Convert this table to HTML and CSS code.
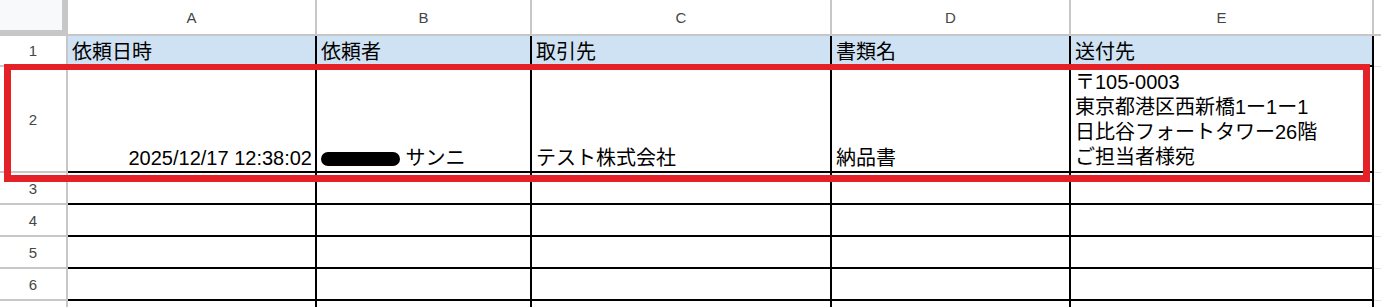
FILE: index.html
```html
<!DOCTYPE html>
<html lang="ja">
<head>
  <meta charset="UTF-8">
  <meta name="viewport" content="width=device-width, initial-scale=1.0">
  <title>送付依頼シート</title>
  <link rel="stylesheet" href="styles.css">
</head>
<body>
  <div class="sheet">
    <!-- column letters -->
    <div class="corner"></div>
    <div class="col-head">A</div>
    <div class="col-head">B</div>
    <div class="col-head">C</div>
    <div class="col-head">D</div>
    <div class="col-head">E</div>
    <div class="col-head rest"></div>

    <!-- row 1: field names -->
    <div class="row-head">1</div>
    <div class="cell title">依頼日時</div>
    <div class="cell title">依頼者</div>
    <div class="cell title">取引先</div>
    <div class="cell title">書類名</div>
    <div class="cell title">送付先</div>
    <div class="cell rest"></div>

    <!-- row 2: first request -->
    <div class="row-head">2</div>
    <div class="cell right">2025/12/17 12:38:02</div>
    <div class="cell"><span class="masked"></span>&nbsp;サンニ</div>
    <div class="cell">テスト株式会社</div>
    <div class="cell">納品書</div>
    <div class="cell">
      <div class="address">〒105-0003<br>東京都港区西新橋1ー1ー1<br>日比谷フォートタワー26階<br>ご担当者様宛</div>
    </div>
    <div class="cell rest"></div>

    <div class="row-head">3</div>
    <div class="cell"></div><div class="cell"></div><div class="cell"></div><div class="cell"></div><div class="cell"></div><div class="cell rest"></div>

    <div class="row-head">4</div>
    <div class="cell"></div><div class="cell"></div><div class="cell"></div><div class="cell"></div><div class="cell"></div><div class="cell rest"></div>

    <div class="row-head">5</div>
    <div class="cell"></div><div class="cell"></div><div class="cell"></div><div class="cell"></div><div class="cell"></div><div class="cell rest"></div>

    <div class="row-head">6</div>
    <div class="cell"></div><div class="cell"></div><div class="cell"></div><div class="cell"></div><div class="cell"></div><div class="cell rest"></div>

    <!-- row 7 only peeks in at the bottom -->
    <div class="row-head"></div>
    <div class="cell"></div><div class="cell"></div><div class="cell"></div><div class="cell"></div><div class="cell"></div><div class="cell rest"></div>
  </div>

  <!-- red marker around row 2 -->
  <div class="highlight"></div>
</body>
</html>
```

FILE: styles.css
```css
body {
  margin: 0;
  background: #fff;
  font-family: 'Liberation Sans', 'Noto Sans CJK JP', sans-serif;
  position: relative;
  overflow: hidden;
}

.sheet {
  display: grid;
  grid-template-columns: 68px 249px 215px 300px 239px 303px 1fr;
  grid-template-rows: 36px 31px 106px 32px 32px 32px 32px 32px;
}

.sheet > div {
  box-sizing: border-box;
}

.corner {
  background: #f8f9fa;
  border-right: 6px solid #c7c7c7;
  border-bottom: 6px solid #c7c7c7;
}

.col-head {
  display: flex;
  align-items: center;
  justify-content: center;
  font-size: 15px;
  color: #444746;
  border-right: 2px solid #c7c7c7;
  border-bottom: 2px solid #c7c7c7;
}

.col-head.rest {
  border-right: none;
}

.row-head {
  display: flex;
  align-items: center;
  justify-content: center;
  font-size: 15px;
  color: #444746;
  border-right: 2px solid #c7c7c7;
  border-bottom: 2px solid #c7c7c7;
}

.cell {
  display: flex;
  align-items: flex-end;
  padding: 0 3px 1px 4px;
  font-size: 20px;
  line-height: 24px;
  color: #000;
  white-space: nowrap;
  border-right: 2px solid #000;
  border-bottom: 2px solid #000;
}

.cell.title {
  background: #cfe2f3;
  padding-bottom: 1px;
}

.cell.right {
  justify-content: flex-end;
}

.cell.rest {
  background: #fff;
  border-right: none;
  border-bottom: 1px solid #e1e1e1;
}

.address {
  line-height: 25px;
}

/* blacked-out name */
.masked {
  display: inline-block;
  width: 79px;
  height: 14px;
  margin-bottom: 4px;
  border-radius: 8px;
  background: #000;
}

.highlight {
  position: absolute;
  left: 4px;
  top: 64px;
  width: 1366px;
  height: 118px;
  box-sizing: border-box;
  border: 7px solid #e42126;
  border-top-width: 6px;
}
```
